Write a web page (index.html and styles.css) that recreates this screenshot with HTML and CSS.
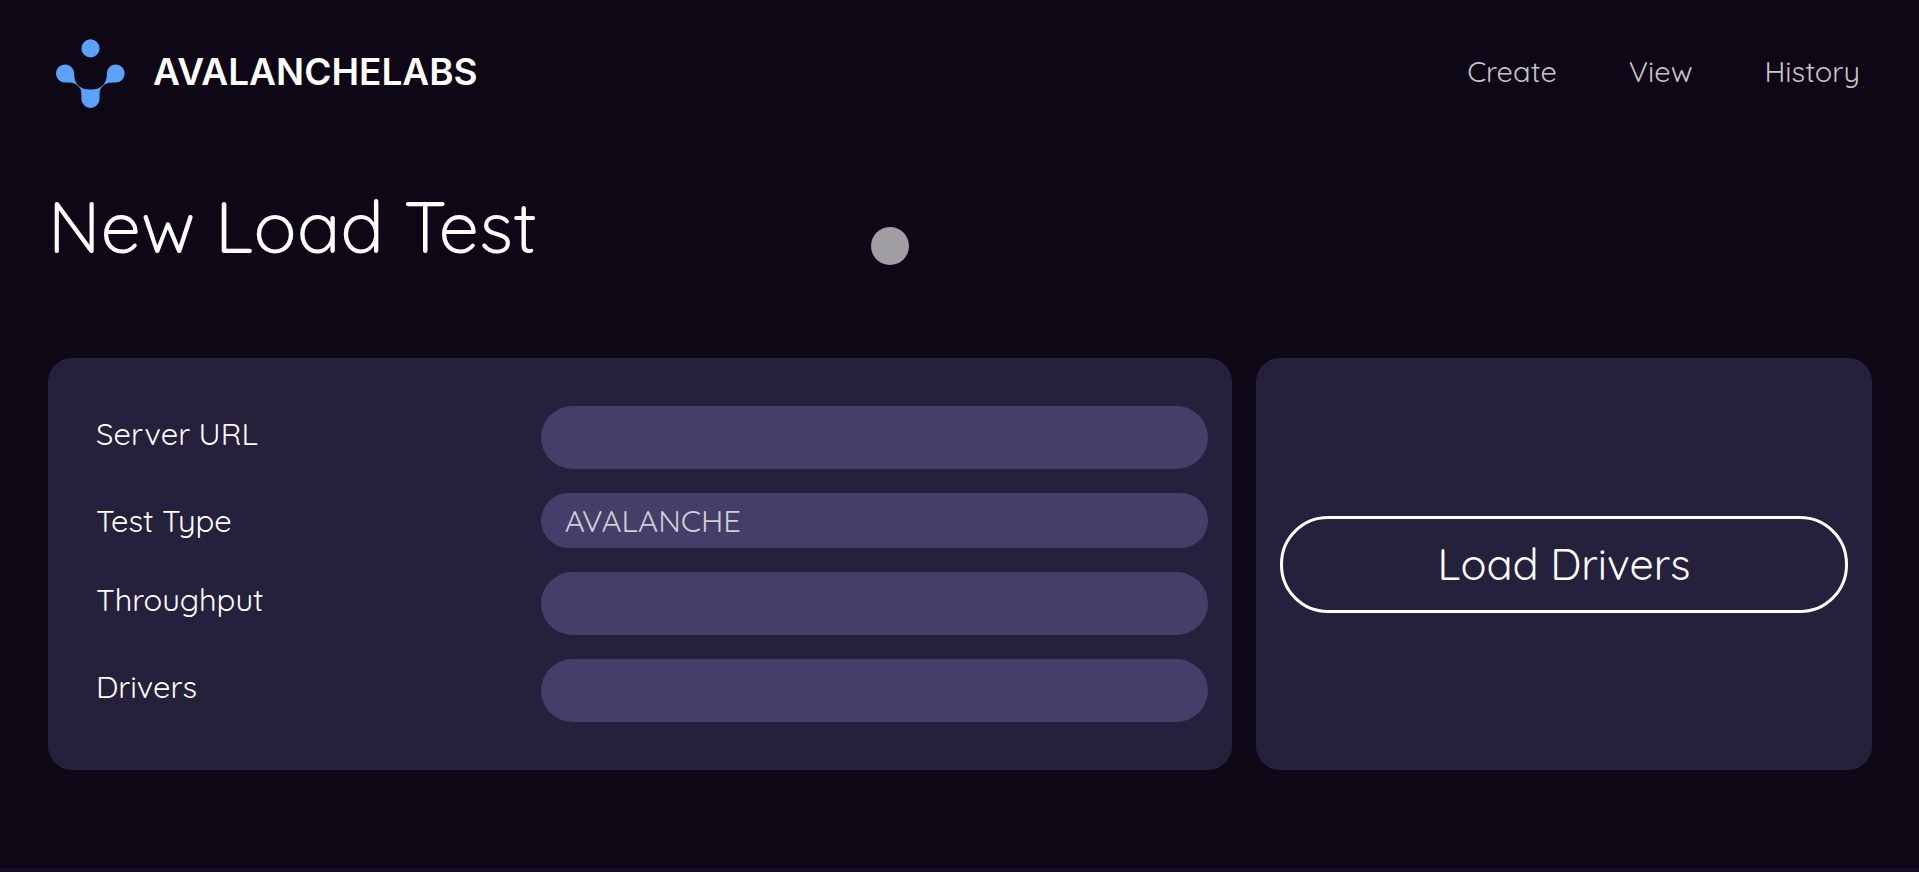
FILE: index.html
```html
<!DOCTYPE html>
<html lang="en">
<head>
  <meta charset="utf-8">
  <meta name="viewport" content="width=device-width, initial-scale=1">
  <title>AvalancheLabs</title>
  <link rel="stylesheet" href="styles.css">
</head>
<body class="page">
  <div class="content">
    <header class="header">
      <a class="brand" href="#">
        <svg class="brand-mark" viewBox="48 59 206 206" aria-hidden="true">
          <circle cx="151" cy="87" r="27"/>
          <path d="M75 135C90 135 102 147 102 162C102 190 116 210 151 210C186 210 200 190 200 162C200 147 211 135 226 135A27 27 0 0 1 226 189C204 189 196 190 184 204C178 210 178 220 178 238A27 27 0 0 1 124 238C124 220 124 210 118 204C106 190 98 189 75 189A27 27 0 0 1 75 135Z"/>
        </svg>
        <span class="brand-name">AVALANCHELABS</span>
      </a>
      <nav class="nav">
        <a class="nav-link" href="#">Create</a>
        <a class="nav-link" href="#">View</a>
        <a class="nav-link" href="#">History</a>
      </nav>
    </header>

    <main class="main">
      <h1 class="title">New Load Test</h1>
      <form class="panels">
        <div class="panel fields">
          <label class="label" for="server-url">Server URL</label>
          <input class="field" id="server-url" type="text">
          <label class="label" for="test-type">Test Type</label>
          <select class="field field-select" id="test-type">
            <option>AVALANCHE</option>
          </select>
          <label class="label" for="throughput">Throughput</label>
          <input class="field" id="throughput" type="text">
          <label class="label" for="drivers">Drivers</label>
          <input class="field" id="drivers" type="text">
        </div>
        <div class="panel actions">
          <button class="button" type="button">Load Drivers</button>
        </div>
      </form>
    </main>
    <div class="pointer"></div>
  </div>
  <footer class="footer"></footer>
</body>
</html>
```

FILE: styles.css
```css
* {
  box-sizing: border-box;
}

.page {
  margin: 0;
  min-height: 100vh;
  display: flex;
  flex-direction: column;
  background: #0e0716;
  color: #fff;
  font-family: Quicksand, Lato, sans-serif;
  font-size: 31px;
  line-height: 40px;
}

.content {
  position: relative;
  padding: 39px 47px 98px 48px;
}

.header {
  display: flex;
  justify-content: space-between;
  align-items: flex-start;
  padding: 0 12px 0 8px;
}

.brand {
  display: flex;
  align-items: center;
  gap: 28px;
  color: #fff;
  text-decoration: none;
}

.brand-mark {
  width: 69px;
  height: 69px;
  fill: #5aa2fc;
}

.brand-name {
  padding-bottom: 3px;
  font-family: Inter, sans-serif;
  font-size: 37px;
  font-weight: 600;
}

.nav {
  display: flex;
  gap: 72px;
  padding-top: 12px;
}

.nav-link {
  color: #c7c5c9;
  font-size: 29px;
  text-decoration: none;
}

.title {
  margin: 74px 0 88px;
  font-size: 72px;
  font-weight: 400;
  line-height: 88px;
}

.panels {
  display: grid;
  grid-template-columns: 148fr 77fr;
  gap: 24px;
}

.panel {
  background: #25203c;
  border-radius: 24px;
}

.fields {
  display: grid;
  grid-template-columns: 2fr 3fr;
  row-gap: 24px;
  padding: 48px 24px 48px 48px;
}

.label {
  padding-top: 8px;
}

.field {
  width: 100%;
  height: 63px;
  padding: 8px 24px;
  border: 0;
  border-radius: 32px;
  background: #443f69;
  color: #d0ced6;
  font: inherit;
}

.field-select {
  height: 55px;
  appearance: none;
}

.actions {
  display: flex;
  align-items: center;
  padding: 24px;
}

.button {
  width: 100%;
  padding: 18px 24px;
  border: 3px solid #fff;
  border-radius: 48px;
  background: transparent;
  color: #fff;
  font: inherit;
  font-size: 43px;
  line-height: 55px;
}

.pointer {
  position: absolute;
  top: 227px;
  left: 871px;
  width: 38px;
  height: 38px;
  border-radius: 50%;
  background: #a09da3;
  pointer-events: none;
}

.footer {
  flex: 1;
  background: #120f24;
}
```
